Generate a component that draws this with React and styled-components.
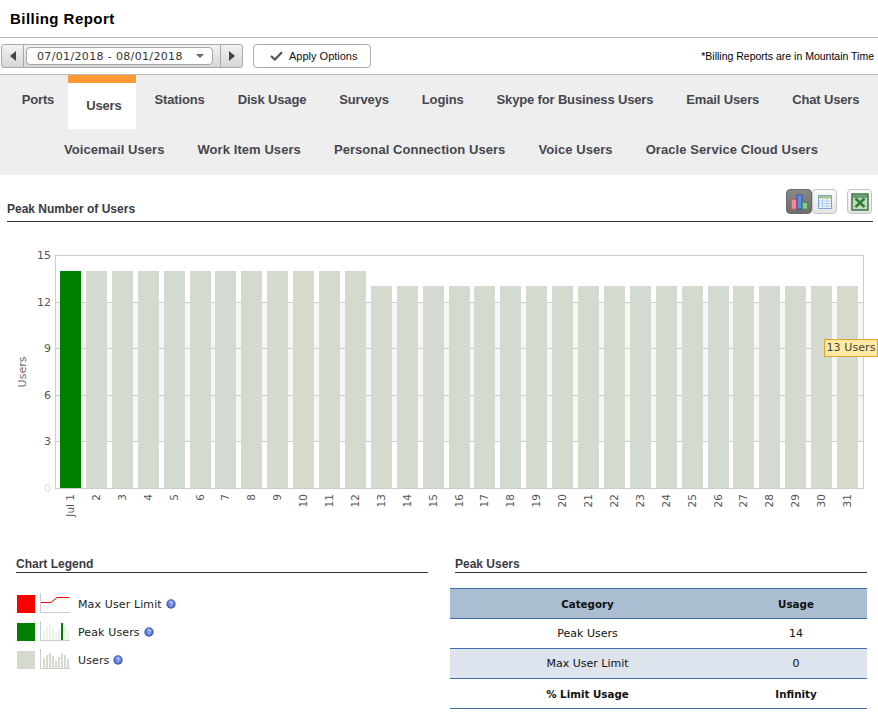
import React from 'react';
import styled, { createGlobalStyle } from 'styled-components';

const Global = createGlobalStyle`
  html, body { margin: 0; padding: 0; background: #fff; }
  body { font-family: "Liberation Sans", Arial, sans-serif; color: #000; }
`;

const Page = styled.div`
  width: 878px;
  height: 721px;
  overflow: hidden;
  position: relative;
`;

const TitleBar = styled.header`
  height: 37px;
  border-bottom: 1px solid #bbb;
  display: flex;
  align-items: center;
  padding-left: 10px;
`;
const Title = styled.h1`
  margin: 0;
  font-size: 15px;
  letter-spacing: 0.45px;
  font-weight: bold;
  color: #000;
`;

const Toolbar = styled.div`
  height: 36px;
  border-bottom: 1px solid #bbb;
  display: flex;
  align-items: center;
  padding: 0 4px 0 1px;
`;
const Stepper = styled.div`
  width: 242px;
  height: 24px;
  box-sizing: border-box;
  border: 1px solid #a9a9a9;
  border-radius: 3px;
  background: linear-gradient(#f2f2f2, #d6d6d6);
  display: flex;
  align-items: center;
`;
const StepButton = styled.button`
  width: ${p => p.$w}px;
  height: 100%;
  padding: 0;
  border: 0;
  ${p => p.$side}: 1px solid #a9a9a9;
  background: transparent;
  display: flex;
  align-items: center;
  justify-content: center;
  flex: none;
`;
const DateSelect = styled.div`
  flex: 1;
  margin: 0 7px 0 2px;
  height: 18px;
  box-sizing: border-box;
  border: 1px solid #a9a9a9;
  border-radius: 4px;
  background: #fff;
  display: flex;
  align-items: center;
  justify-content: space-between;
  padding: 0 8px 0 10px;
  font: 11px "DejaVu Sans", Verdana, sans-serif;
  letter-spacing: 0.35px;
  color: #333;
`;
const ApplyButton = styled.button`
  margin-left: 10px;
  width: 118px;
  height: 24px;
  box-sizing: border-box;
  border: 1px solid #aaa;
  border-radius: 4px;
  background: #fff;
  display: flex;
  align-items: center;
  padding: 0 0 1px 16px;
  gap: 6px;
  font: 11px "Liberation Sans", Arial, sans-serif;
  color: #111;
`;
const Note = styled.div`
  margin-left: auto;
  font-size: 10.5px;
  color: #000;
`;

const Tabs = styled.nav`
  height: 100px;
  background: #eee;
`;
const TabRow = styled.div`
  height: 50px;
  padding-left: ${p => p.$pl}px;
  display: flex;
  justify-content: center;
  align-items: flex-start;
  letter-spacing: ${p => p.$ls}px;
`;
const Tab = styled.a`
  box-sizing: border-box;
  height: ${p => (p.$active ? 54 : 50)}px;
  margin: ${p => (p.$active ? '0 2.5px 0 -2.5px' : '0')};
  padding: ${p => (p.$active ? '0 14px 0 18px' : '0 16.5px')};
  line-height: ${p => (p.$active ? 46 : 49)}px;
  font-size: 13px;
  font-weight: bold;
  color: #47474f;
  white-space: nowrap;
  flex: none;
  background: ${p => (p.$active ? '#fff' : 'transparent')};
  border-top: ${p => (p.$active ? '8px solid #ff9933' : '0')};
`;

const SectionHead = styled.div`
  display: flex;
  align-items: flex-end;
  justify-content: space-between;
  border-bottom: 1px solid #333;
  box-sizing: border-box;
  height: ${p => p.$h}px;
  padding-bottom: ${p => p.$pb}px;
`;
const SectionTitle = styled.h2`
  margin: 0;
  font-size: 12px;
  line-height: 14px;
  font-weight: bold;
  color: #3a3a44;
`;
const ChartHead = styled(SectionHead)`
  margin: 0 5px 0 7px;
`;
const ViewIcons = styled.div`
  display: flex;
  align-items: center;
  padding-bottom: 2px;
  margin-right: 1px;
`;
const IconButton = styled.button`
  width: ${p => p.$w || 25}px;
  height: 25px;
  padding: 0;
  margin-left: ${p => p.$ml || 0}px;
  box-sizing: border-box;
  border: 1px solid ${p => (p.$active ? '#6b6b6b' : '#c4c4c4')};
  border-radius: 4px;
  background: ${p => (p.$active ? 'linear-gradient(#888, #6c6c6c)' : 'linear-gradient(#fafafa, #e4e4e4)')};
  display: flex;
  align-items: center;
  justify-content: center;
`;

const ChartWrap = styled.div`
  position: relative;
  height: 320px;
`;
const ChartSvg = styled.svg`
  display: block;
  font-family: "DejaVu Sans", Verdana, sans-serif;
`;
const Tooltip = styled.div`
  position: absolute;
  left: 824px;
  top: 117px;
  width: 54px;
  height: 18px;
  box-sizing: border-box;
  background: #ffe9a3;
  border: 1px solid #e8a32e;
  font: 11px/16px "DejaVu Sans", Verdana, sans-serif;
  letter-spacing: 0.1px;
  color: #444;
  text-align: center;
  white-space: nowrap;
`;

const Lower = styled.div`
  display: grid;
  grid-template-columns: 428px 439px;
`;
const LegendCol = styled.section`
  padding-left: 16px;
`;
const TableCol = styled.section`
  padding-left: 22px;
`;
const LowerHead = styled(SectionHead)`
  margin-left: ${p => p.$ml || 0}px;
`;
const LegendList = styled.ul`
  list-style: none;
  margin: 22px 0 0;
  padding: 0 0 0 1px;
  display: flex;
  flex-direction: column;
  gap: 10px;
`;
const LegendRow = styled.li`
  display: flex;
  align-items: center;
  height: 18px;
  font: 11px "DejaVu Sans", Verdana, sans-serif;
  color: #222;
`;
const Swatch = styled.span`
  width: 18px;
  height: 18px;
  background: ${p => p.$c};
  flex: none;
  margin-right: 5px;
`;
const MiniSvg = styled.svg`
  overflow: visible;
  flex: none;
`;
const LegendLabel = styled.span`
  margin: 0 4px 0 8px;
  letter-spacing: 0.12px;
`;
const Table = styled.table`
  width: 417px;
  margin-top: 15px;
  border-collapse: collapse;
  table-layout: fixed;
  font: 11px "DejaVu Sans", Verdana, sans-serif;
  color: #111;
`;
const Row = styled.tr`
  height: 30px;
  background: ${p => p.$bg || '#fff'};
  border-top: 1px solid #3f70ad;
  border-bottom: 1px solid #3f70ad;
`;
const Cell = styled.td`
  padding: 0;
  text-align: center;
  font-weight: ${p => (p.$bold ? 'bold' : 'normal')};
  font-size: ${p => (p.$bold ? '10.3px' : '11px')};
  width: ${p => p.$w || 'auto'};
`;

const tabs1 = ['Ports', 'Users', 'Stations', 'Disk Usage', 'Surveys', 'Logins', 'Skype for Business Users', 'Email Users', 'Chat Users'];
const tabs2 = ['Voicemail Users', 'Work Item Users', 'Personal Connection Users', 'Voice Users', 'Oracle Service Cloud Users'];

const X0 = 60, PITCH = 25.9, BW = 21, YB = 488, UNIT = 15.53;
const days = Array.from({ length: 31 }, (_, i) => i + 1);

function Chart() {
  const yOf = v => Math.round(YB - v * UNIT);
  return (
    <ChartSvg width="878" height="320" viewBox="0 222 878 320">
      <rect x="55.5" y="255.5" width="808" height="233" fill="#fff" stroke="#ccc" />
      <rect x="56" y={yOf(12)} width="807" height={yOf(3) - yOf(12)} fill="#f6f6f6" />
      {[3, 6, 9, 12].map(v => (
        <line key={v} x1="55" x2="864" y1={yOf(v) + 0.5} y2={yOf(v) + 0.5} stroke="#ccc" />
      ))}
      {days.map((d, i) => {
        const v = d <= 12 ? 14 : 13;
        const y = yOf(v);
        return <rect key={d} x={Math.round(X0 + i * PITCH)} y={y} width={BW} height={YB - y} fill={i === 0 ? '#008000' : '#d4dacd'} />;
      })}
      {[15, 12, 9, 6, 3].map(v => (
        <text key={v} x="51" y={YB - v * UNIT + 4} textAnchor="end" fontSize="11" fill="#555">{v}</text>
      ))}
      <text x="51" y="492" textAnchor="end" fontSize="11" fill="#f0d8d8">0</text>
      <text transform="translate(26 372) rotate(-90)" textAnchor="middle" fontSize="11" fill="#666">Users</text>
      {days.map((d, i) => {
        const cx = Math.round(X0 + i * PITCH) + 13.5;
        return (
          <text key={d} transform={`translate(${cx} 494) rotate(-90)`} textAnchor="end" fontSize="10.5" fill="#555">
            {d === 1 ? 'Jul 1' : d}
          </text>
        );
      })}
    </ChartSvg>
  );
}

const Help = () => (
  <svg width="10" height="10" viewBox="0 0 10 10">
    <circle cx="5" cy="5" r="4.7" fill="#4a62bf" />
    <circle cx="5" cy="4.4" r="3.4" fill="#6a84dc" />
    <path d="M3.4 4C3.6 2.7 6.5 2.7 6.5 4C6.5 5 5 4.8 5 5.8" fill="none" stroke="#e6ecff" strokeWidth="1" />
    <rect x="4.5" y="6.6" width="1" height="1" fill="#e6ecff" />
  </svg>
);

const Mini = ({ kind }) => {
  const hs = [10, 13, 15, 12, 7, 11, 15, 13, 9];
  return (
    <MiniSvg width="30" height="18" viewBox="0 0 30 18">
      <path d="M0.5 -2V17.5H30" fill="none" stroke="#ccc" />
      {kind === 'limit' && <path d="M1 7.5H11L17 2.5H29" fill="none" stroke="#f00" />}
      {kind !== 'limit' && hs.map((h, i) => {
        const peak = kind === 'peak' && i === 6;
        return (
          <rect key={i} x={3 + i * 3} y={peak ? 0 : 17 - h} width="2" height={peak ? 17 : h}
            fill={peak ? '#008000' : kind === 'peak' ? '#eef0ea' : '#d4dacd'} />
        );
      })}
    </MiniSvg>
  );
};

export default function App() {
  return (
    <Page>
      <Global />
      <TitleBar><Title>Billing Report</Title></TitleBar>
      <Toolbar>
        <Stepper>
          <StepButton $w={22} $side="border-right">
            <svg width="6" height="10" viewBox="0 0 6 10"><path d="M6 0V10L0 5Z" fill="#444" /></svg>
          </StepButton>
          <DateSelect>
            <span>07/01/2018 - 08/01/2018</span>
            <svg width="8" height="4" viewBox="0 0 8 4"><path d="M0 0H8L4 4Z" fill="#666" /></svg>
          </DateSelect>
          <StepButton $w={22} $side="border-left">
            <svg width="6" height="10" viewBox="0 0 6 10"><path d="M0 0V10L6 5Z" fill="#444" /></svg>
          </StepButton>
        </Stepper>
        <ApplyButton>
          <svg width="13" height="10" viewBox="0 0 13 10"><path d="M1 5L4.8 8.5L12 1.2" fill="none" stroke="#555" strokeWidth="2.2" /></svg>
          Apply Options
        </ApplyButton>
        <Note>*Billing Reports are in Mountain Time</Note>
      </Toolbar>
      <Tabs>
        <TabRow $ls={-0.15} $pl={3}>
          {tabs1.map(t => <Tab key={t} $active={t === 'Users'}>{t}</Tab>)}
        </TabRow>
        <TabRow $ls={0.07} $pl={4}>
          {tabs2.map(t => <Tab key={t}>{t}</Tab>)}
        </TabRow>
      </Tabs>
      <ChartHead $h={47} $pb={5}>
        <SectionTitle>Peak Number of Users</SectionTitle>
        <ViewIcons>
          <IconButton $active $w={26} aria-label="Chart view">
            <svg width="17" height="16" viewBox="0 0 17 16">
              <rect x="0.5" y="5.5" width="5" height="9.5" fill="#f58a92" stroke="#e0505c" strokeWidth="0.8" />
              <rect x="6" y="1" width="5" height="14" fill="#5b8fe0" stroke="#2646b0" strokeWidth="0.8" />
              <rect x="11.5" y="8.5" width="5" height="6.5" fill="#8ccb8e" stroke="#3c8f40" strokeWidth="0.8" />
            </svg>
          </IconButton>
          <IconButton $w={25} aria-label="Table view">
            <svg width="16" height="16" viewBox="0 0 16 16">
              <rect x="1.5" y="1.5" width="13" height="13" fill="#f3f7fd" stroke="#7fa6dc" />
              <rect x="2" y="2" width="12" height="2.5" fill="#a9c87f" />
              <path d="M2 7H14M2 9.5H14M2 12H14M5.5 5V14M10 5V14" stroke="#a7c0e4" strokeWidth="0.8" fill="none" />
            </svg>
          </IconButton>
          <IconButton $w={25} $ml={10} aria-label="Export to Excel">
            <svg width="18" height="18" viewBox="0 0 18 18">
              <rect x="1" y="1" width="16" height="16" fill="#c3d8bc" stroke="#356b3c" strokeWidth="1.4" />
              <rect x="2" y="2" width="14" height="3" fill="#6f9b75" />
              <path d="M4.5 5.5L13.5 14M13.5 5.5L4.5 14" stroke="#2f7d38" strokeWidth="2.6" />
            </svg>
          </IconButton>
        </ViewIcons>
      </ChartHead>
      <ChartWrap>
        <Chart />
        <Tooltip>13 Users</Tooltip>
      </ChartWrap>
      <Lower>
        <LegendCol>
          <LowerHead $h={31} $pb={1}><SectionTitle>Chart Legend</SectionTitle></LowerHead>
          <LegendList>
            <LegendRow><Swatch $c="#f00" /><Mini kind="limit" /><LegendLabel>Max User Limit</LegendLabel><Help /></LegendRow>
            <LegendRow><Swatch $c="#008000" /><Mini kind="peak" /><LegendLabel>Peak Users</LegendLabel><Help /></LegendRow>
            <LegendRow><Swatch $c="#d4dacd" /><Mini kind="users" /><LegendLabel>Users</LegendLabel><Help /></LegendRow>
          </LegendList>
        </LegendCol>
        <TableCol>
          <LowerHead $h={31} $pb={1} $ml={5}><SectionTitle>Peak Users</SectionTitle></LowerHead>
          <Table>
            <tbody>
              <Row $bg="#abbdd0"><Cell $bold $w="275px">Category</Cell><Cell $bold>Usage</Cell></Row>
              <Row><Cell>Peak Users</Cell><Cell>14</Cell></Row>
              <Row $bg="#dde4ed"><Cell>Max User Limit</Cell><Cell>0</Cell></Row>
              <Row><Cell $bold>% Limit Usage</Cell><Cell $bold>Infinity</Cell></Row>
            </tbody>
          </Table>
        </TableCol>
      </Lower>
    </Page>
  );
}
